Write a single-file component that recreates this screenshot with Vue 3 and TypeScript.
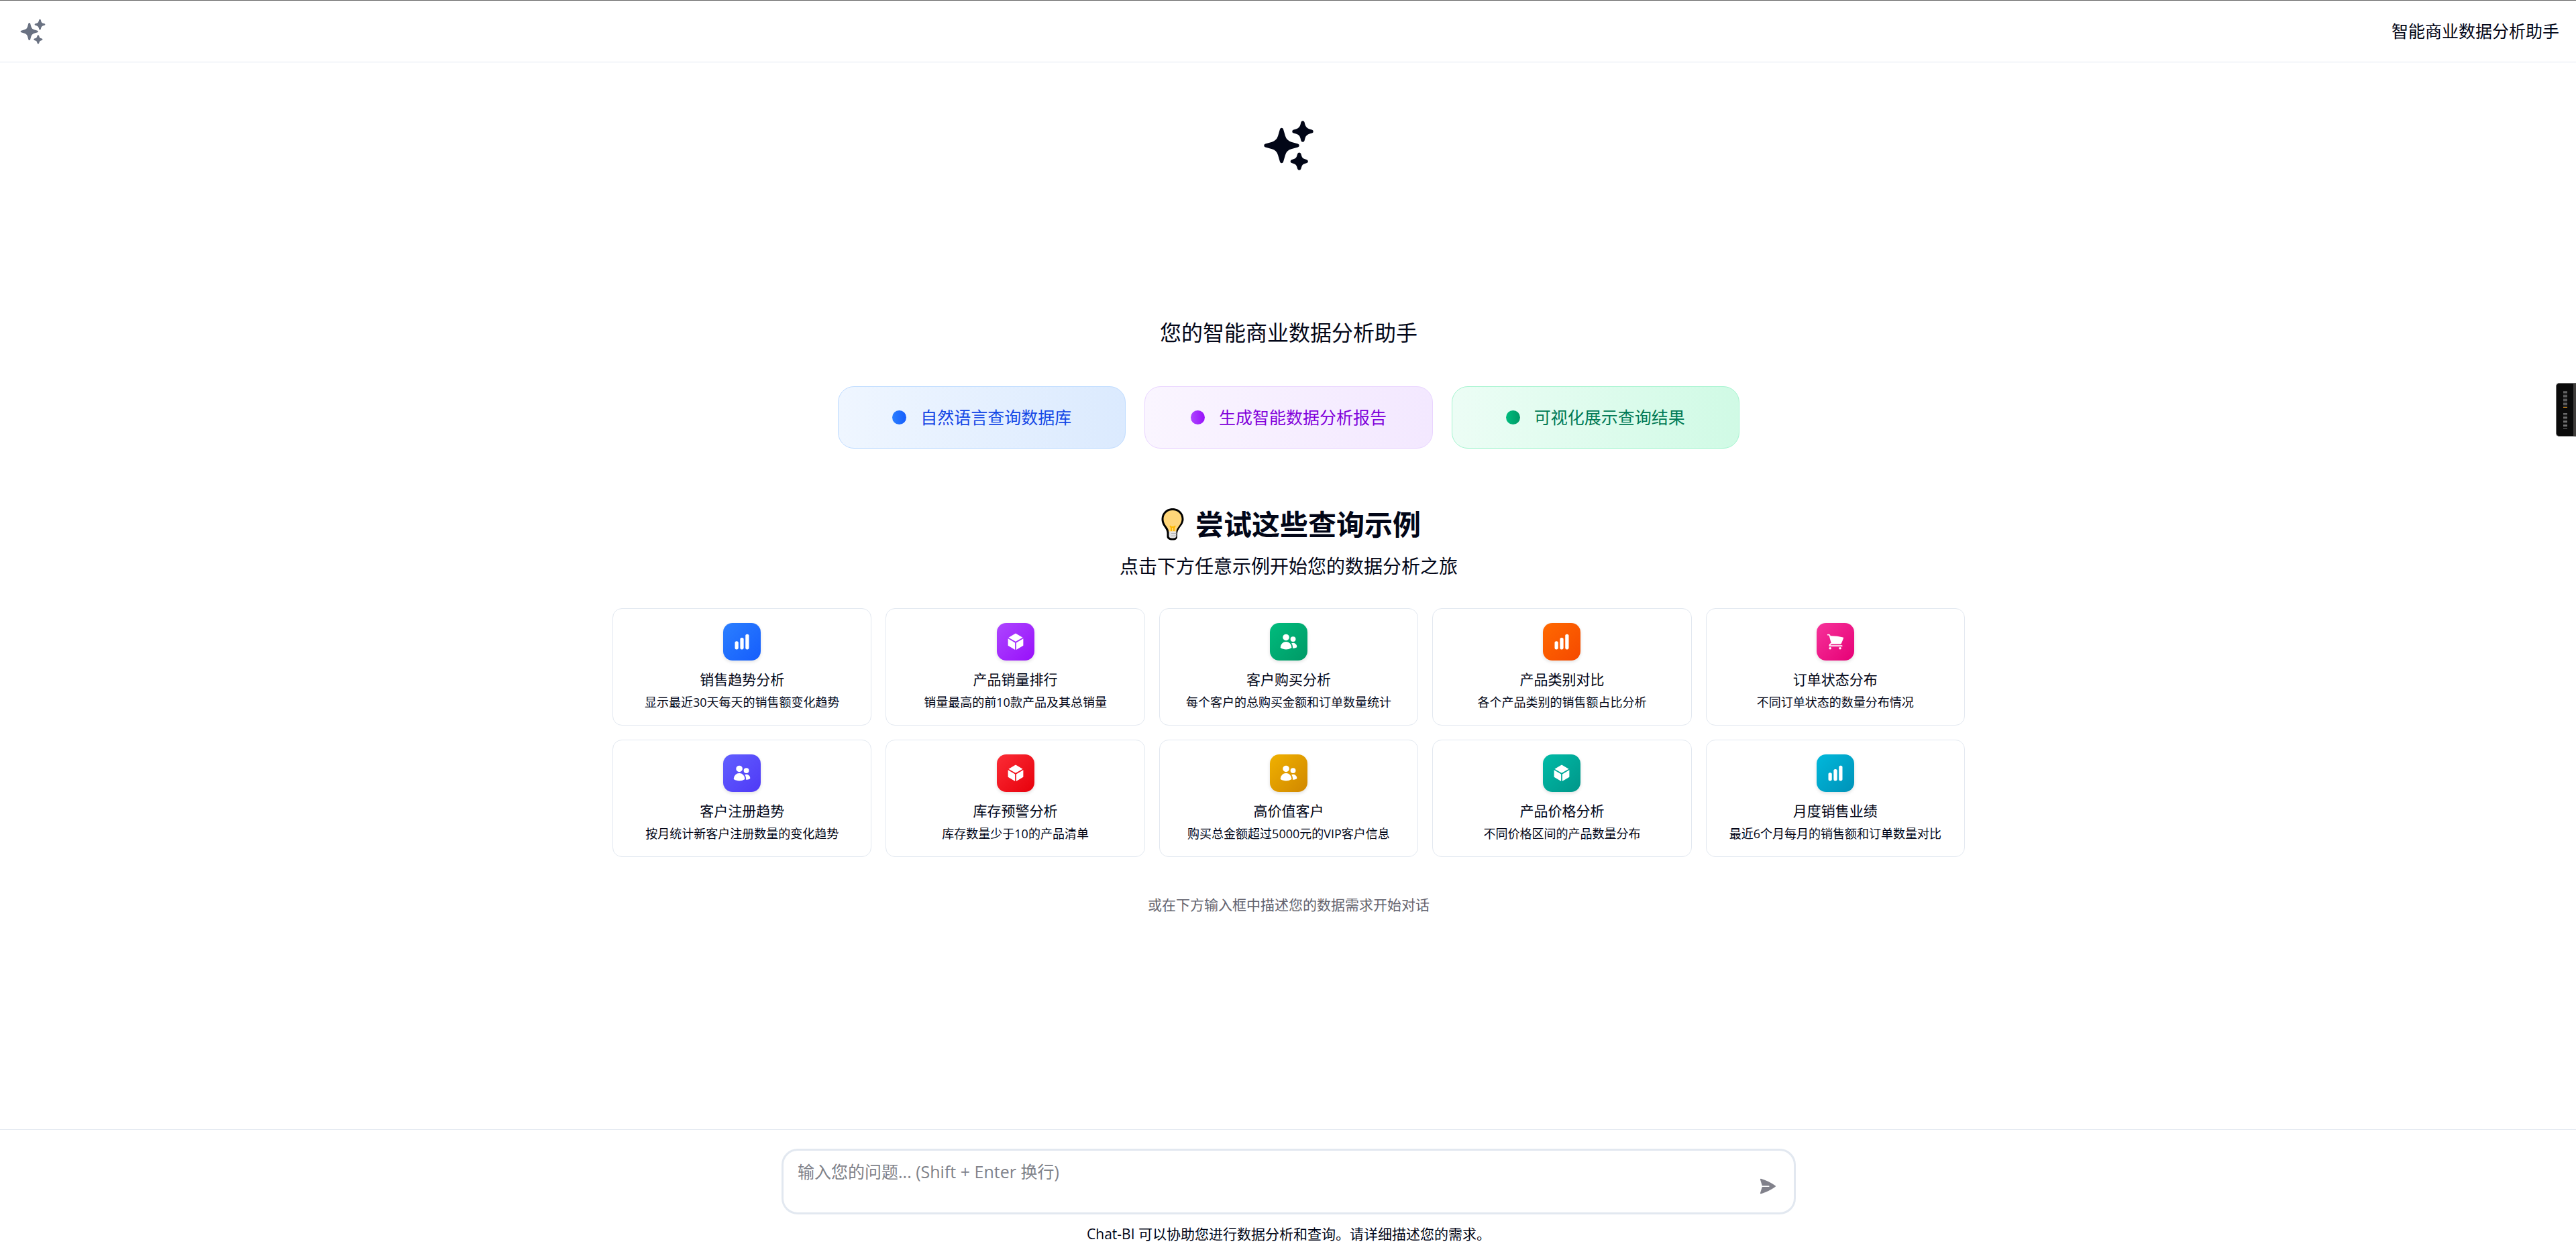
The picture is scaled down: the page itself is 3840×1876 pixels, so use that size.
<script setup lang="ts">
import { ref } from 'vue'

type IconName = 'chart' | 'cube' | 'users' | 'cart'

interface Feature {
  label: string
  tone: string
}

interface Example {
  title: string
  description: string
  icon: IconName
  tone: string
}

const iconPaths: Record<IconName, string> = {
  chart:
    'M18.375 2.25c-1.035 0-1.875.84-1.875 1.875v15.75c0 1.035.84 1.875 1.875 1.875h.75c1.035 0 1.875-.84 1.875-1.875V4.125c0-1.036-.84-1.875-1.875-1.875h-.75ZM9.75 8.625c0-1.036.84-1.875 1.875-1.875h.75c1.036 0 1.875.84 1.875 1.875v11.25c0 1.035-.84 1.875-1.875 1.875h-.75a1.875 1.875 0 0 1-1.875-1.875V8.625ZM3 13.125c0-1.036.84-1.875 1.875-1.875h.75c1.036 0 1.875.84 1.875 1.875v6.75c0 1.035-.84 1.875-1.875 1.875h-.75A1.875 1.875 0 0 1 3 19.875v-6.75Z',
  cube: 'M12.378 1.602a.75.75 0 0 0-.756 0L3 6.632l9 5.25 9-5.25-8.622-5.03ZM21.75 7.93l-9 5.25v9l8.628-5.032a.75.75 0 0 0 .372-.648V7.93ZM11.25 22.18v-9l-9-5.25v8.57a.75.75 0 0 0 .372.648l8.628 5.033Z',
  users:
    'M4.5 6.375a4.125 4.125 0 1 1 8.25 0 4.125 4.125 0 0 1-8.25 0ZM14.25 8.625a3.375 3.375 0 1 1 6.75 0 3.375 3.375 0 0 1-6.75 0ZM1.5 19.125a7.125 7.125 0 0 1 14.25 0v.003l-.001.119a.75.75 0 0 1-.363.63 13.067 13.067 0 0 1-6.761 1.873c-2.472 0-4.786-.684-6.76-1.873a.75.75 0 0 1-.364-.63l-.001-.122ZM17.25 19.128l-.001.144a2.25 2.25 0 0 1-.233.96 10.088 10.088 0 0 0 5.06-1.01.75.75 0 0 0 .42-.643 4.875 4.875 0 0 0-6.957-4.611 8.586 8.586 0 0 1 1.71 5.157v.003Z',
  cart: 'M2.25 2.25a.75.75 0 0 0 0 1.5h1.386c.17 0 .318.114.362.278l2.558 9.592a3.752 3.752 0 0 0-2.806 3.63c0 .414.336.75.75.75h15.75a.75.75 0 0 0 0-1.5H5.378A2.25 2.25 0 0 1 7.5 15h11.218a.75.75 0 0 0 .674-.421 60.358 60.358 0 0 0 2.96-7.228.75.75 0 0 0-.525-.965A60.864 60.864 0 0 0 5.68 4.509l-.232-.867A1.875 1.875 0 0 0 3.636 2.25H2.25ZM3.75 20.25a1.5 1.5 0 1 1 3 0 1.5 1.5 0 0 1-3 0ZM16.5 20.25a1.5 1.5 0 1 1 3 0 1.5 1.5 0 0 1-3 0Z',
}

const sparkles =
  'M9 4.5a.75.75 0 0 1 .721.544l.813 2.846a3.75 3.75 0 0 0 2.576 2.576l2.846.813a.75.75 0 0 1 0 1.442l-2.846.813a3.75 3.75 0 0 0-2.576 2.576l-.813 2.846a.75.75 0 0 1-1.442 0l-.813-2.846a3.75 3.75 0 0 0-2.576-2.576l-2.846-.813a.75.75 0 0 1 0-1.442l2.846-.813A3.75 3.75 0 0 0 7.466 7.89l.813-2.846A.75.75 0 0 1 9 4.5ZM18 1.5a.75.75 0 0 1 .728.568l.258 1.036c.236.94.97 1.674 1.91 1.91l1.036.258a.75.75 0 0 1 0 1.456l-1.036.258c-.94.236-1.674.97-1.91 1.91l-.258 1.036a.75.75 0 0 1-1.456 0l-.258-1.036a2.625 2.625 0 0 0-1.91-1.91l-1.036-.258a.75.75 0 0 1 0-1.456l1.036-.258a2.625 2.625 0 0 0 1.91-1.91l.258-1.036A.75.75 0 0 1 18 1.5ZM16.5 15a.75.75 0 0 1 .712.513l.394 1.183c.15.447.5.799.948.948l1.183.395a.75.75 0 0 1 0 1.422l-1.183.395c-.447.15-.799.5-.948.948l-.395 1.183a.75.75 0 0 1-1.422 0l-.395-1.183a1.5 1.5 0 0 0-.948-.948l-1.183-.395a.75.75 0 0 1 0-1.422l1.183-.395c.447-.15.799-.5.948-.948l.395-1.183A.75.75 0 0 1 16.5 15Z'

const features: Feature[] = [
  { label: '自然语言查询数据库', tone: 'blue' },
  { label: '生成智能数据分析报告', tone: 'purple' },
  { label: '可视化展示查询结果', tone: 'emerald' },
]

const examples: Example[] = [
  { title: '销售趋势分析', description: '显示最近30天每天的销售额变化趋势', icon: 'chart', tone: 'blue' },
  { title: '产品销量排行', description: '销量最高的前10款产品及其总销量', icon: 'cube', tone: 'purple' },
  { title: '客户购买分析', description: '每个客户的总购买金额和订单数量统计', icon: 'users', tone: 'emerald' },
  { title: '产品类别对比', description: '各个产品类别的销售额占比分析', icon: 'chart', tone: 'orange' },
  { title: '订单状态分布', description: '不同订单状态的数量分布情况', icon: 'cart', tone: 'pink' },
  { title: '客户注册趋势', description: '按月统计新客户注册数量的变化趋势', icon: 'users', tone: 'indigo' },
  { title: '库存预警分析', description: '库存数量少于10的产品清单', icon: 'cube', tone: 'red' },
  { title: '高价值客户', description: '购买总金额超过5000元的VIP客户信息', icon: 'users', tone: 'yellow' },
  { title: '产品价格分析', description: '不同价格区间的产品数量分布', icon: 'cube', tone: 'teal' },
  { title: '月度销售业绩', description: '最近6个月每月的销售额和订单数量对比', icon: 'chart', tone: 'cyan' },
]

const question = ref('')

function pick(example: Example) {
  question.value = example.description
}
</script>

<template>
  <div class="page">
    <header class="topbar">
      <svg class="brand" viewBox="0 0 24 24" fill="currentColor" aria-hidden="true"><path :d="sparkles" /></svg>
      <span class="topbar-title">智能商业数据分析助手</span>
    </header>

    <main class="main">
      <svg class="hero-icon" viewBox="0 0 24 24" fill="currentColor" aria-hidden="true"><path :d="sparkles" /></svg>
      <h1 class="hero-title">您的智能商业数据分析助手</h1>

      <ul class="features">
        <li v-for="f in features" :key="f.label" class="feature" :class="f.tone">
          <span class="dot"></span>
          <span>{{ f.label }}</span>
        </li>
      </ul>

      <h2 class="examples-title">
        <svg class="bulb" viewBox="0 0 48 48" aria-hidden="true">
          <path
            d="M24 0C14.500 0 7.500 7 7.500 16c0 6 2.500 9.500 5 13 2 3 3 5.500 3 9v4c0 3.500 3 5.500 8.500 5.500s7-2 7-5.500v-4c0-3.500 1.500-6 3.500-9 2.500-3.500 6-7 6-13C40.500 7 33.500 0 24 0Z"
            fill="#000"
          />
          <path
            d="M24 3C16 3 10.500 8.700 10.500 16c0 5.200 2.300 8.200 4.800 11.700 1.700 2.500 2.700 4.300 3 7.300h11c.4-3 1.400-4.800 3.200-7.300 2.500-3.500 5-6.500 5-11.700C37.500 8.700 32 3 24 3Z"
            fill="#ffd679"
          />
          <path d="M22 34v-5l-2-3M26 34v-5l2-3M21 28h6" fill="none" stroke="#ffb900" stroke-width="2" />
          <path d="M18.500 34.500h11v7c0 2-2 3.300-5.500 3.300s-5.500-1.300-5.500-3.300v-7Z" fill="#e3e3e3" />
          <path d="M22 37.500h7.500M22 41h7.500" stroke="#b4b4b4" stroke-width="1" />
        </svg>
        <span>尝试这些查询示例</span>
      </h2>
      <p class="examples-sub">点击下方任意示例开始您的数据分析之旅</p>

      <div class="cards">
        <button v-for="e in examples" :key="e.title" type="button" class="card" @click="pick(e)">
          <span class="tile" :class="e.tone">
            <svg viewBox="0 0 24 24" fill="currentColor" aria-hidden="true"><path :d="iconPaths[e.icon]" /></svg>
          </span>
          <span class="card-title">{{ e.title }}</span>
          <span class="card-text">{{ e.description }}</span>
        </button>
      </div>

      <p class="hint">或在下方输入框中描述您的数据需求开始对话</p>
    </main>

    <footer class="composer">
      <form class="box" @submit.prevent>
        <textarea
          v-model="question"
          class="input"
          rows="1"
          aria-label="输入您的问题"
          placeholder="输入您的问题... (Shift + Enter 换行)"
        ></textarea>
        <button type="submit" class="send" aria-label="发送">
          <svg viewBox="0 0 24 24" fill="currentColor" aria-hidden="true">
            <path
              d="M3.478 2.404a.75.75 0 0 0-.926.941l2.432 7.905H13.5a.75.75 0 0 1 0 1.5H4.984l-2.432 7.905a.75.75 0 0 0 .926.94 60.519 60.519 0 0 0 18.445-8.986.75.75 0 0 0 0-1.218A60.517 60.517 0 0 0 3.478 2.404Z"
            />
          </svg>
        </button>
      </form>
      <p class="note">Chat-BI 可以协助您进行数据分析和查询。请详细描述您的需求。</p>
    </footer>

    <aside class="meter" aria-hidden="true">
      <span class="bars"></span>
      <span class="mark"></span>
      <span class="bars second"></span>
    </aside>
  </div>
</template>

<style>
body {
  margin: 0;
  background: #fff;
}
</style>

<style scoped>
.page {
  box-sizing: border-box;
  display: flex;
  flex-direction: column;
  min-height: 100vh;
  border-top: 1px solid #666;
  color: #020617;
  font-family: 'Open Sans', 'Noto Sans CJK SC', sans-serif;
  font-size: 21px;
}

h1,
h2,
p,
ul {
  margin: 0;
  padding: 0;
}

button,
textarea {
  font: inherit;
  color: inherit;
}

.topbar {
  display: flex;
  align-items: center;
  justify-content: space-between;
  height: 91px;
  padding: 0 25px 0 28px;
  border-bottom: 1px solid #e2e8f0;
}

.brand {
  width: 42px;
  height: 42px;
  color: #6a7282;
}

.topbar-title {
  font-size: 25px;
  line-height: 35px;
}

.main {
  flex: 1;
  display: flex;
  flex-direction: column;
  align-items: center;
  padding: 82px 28px 28px 30px;
}

.hero-icon {
  width: 84px;
  height: 84px;
}

.hero-title {
  margin-top: 216px;
  font-size: 32px;
  line-height: 42px;
  font-weight: 400;
}

.features {
  display: grid;
  grid-template-columns: repeat(3, 1fr);
  gap: 28px;
  width: 100%;
  max-width: 1344px;
  margin-top: 59px;
  list-style: none;
}

.feature {
  display: flex;
  align-items: center;
  justify-content: center;
  gap: 21px;
  padding: 28px 20px;
  border: 1px solid;
  border-radius: 24px;
  font-size: 25px;
  line-height: 35px;
}

.dot {
  width: 21px;
  height: 21px;
  border-radius: 50%;
}

.feature.blue {
  background: linear-gradient(to right, #eff6ff, #dbeafe);
  border-color: #bedbff;
  color: #1447e6;
}

.feature.purple {
  background: linear-gradient(to right, #faf5ff, #f3e8ff);
  border-color: #e9d4ff;
  color: #8200db;
}

.feature.emerald {
  background: linear-gradient(to right, #ecfdf5, #d0fae5);
  border-color: #a4f4cf;
  color: #007a55;
}

.blue .dot {
  background: linear-gradient(to right, #2b7fff, #155dfc);
}

.purple .dot {
  background: linear-gradient(to right, #ad46ff, #9810fa);
}

.emerald .dot {
  background: linear-gradient(to right, #00bc7d, #009966);
}

.examples-title {
  display: flex;
  align-items: center;
  gap: 10px;
  margin-top: 85px;
  font-size: 42px;
  line-height: 56px;
  font-weight: 700;
}

.bulb {
  width: 48px;
  height: 48px;
}

.examples-sub {
  margin-top: 13px;
  font-size: 28px;
  line-height: 42px;
}

.cards {
  display: grid;
  grid-template-columns: repeat(5, 1fr);
  gap: 21px;
  width: 100%;
  max-width: 2016px;
  margin-top: 42px;
}

.card {
  display: flex;
  flex-direction: column;
  align-items: center;
  padding: 21px 20px;
  border: 1px solid #e2e8f0;
  border-radius: 14px;
  background: #fff;
  cursor: pointer;
}

.tile {
  display: flex;
  align-items: center;
  justify-content: center;
  width: 56px;
  height: 56px;
  border-radius: 14px;
  color: #fff;
  box-shadow: 0 2px 5px rgb(0 0 0 / 12%);
}

.tile svg {
  width: 28px;
  height: 28px;
}

.tile.blue {
  background: linear-gradient(to bottom right, #2b7fff, #155dfc);
}

.tile.purple {
  background: linear-gradient(to bottom right, #ad46ff, #9810fa);
}

.tile.emerald {
  background: linear-gradient(to bottom right, #00bc7d, #009966);
}

.tile.orange {
  background: linear-gradient(to bottom right, #ff6900, #f54900);
}

.tile.pink {
  background: linear-gradient(to bottom right, #f6339a, #e60076);
}

.tile.indigo {
  background: linear-gradient(to bottom right, #615fff, #4f39f6);
}

.tile.red {
  background: linear-gradient(to bottom right, #fb2c36, #e7000b);
}

.tile.yellow {
  background: linear-gradient(to bottom right, #f0b100, #d08700);
}

.tile.teal {
  background: linear-gradient(to bottom right, #00bba7, #009689);
}

.tile.cyan {
  background: linear-gradient(to bottom right, #00b8db, #0092b8);
}

.card-title {
  margin-top: 14px;
  font-size: 21px;
  line-height: 28px;
}

.card-text {
  margin-top: 7px;
  font-size: 18px;
  line-height: 26px;
}

.hint {
  margin-top: 57px;
  color: #64646f;
  font-size: 21px;
  line-height: 28px;
}

.composer {
  display: flex;
  flex-direction: column;
  align-items: center;
  padding: 28px 28px 21px 30px;
  border-top: 1px solid #e2e8f0;
}

.box {
  box-sizing: border-box;
  display: flex;
  align-items: flex-end;
  width: 100%;
  max-width: 1512px;
  border: 3px solid #e2e8f0;
  border-radius: 24px;
  background: #fff;
}

.input {
  box-sizing: border-box;
  flex: 1;
  height: 92px;
  padding: 14px 21px;
  border: 0;
  outline: 0;
  background: transparent;
  font-size: 25px;
  line-height: 35px;
  resize: none;
}

.input::placeholder {
  color: #80828a;
  opacity: 1;
}

.send {
  display: flex;
  align-items: center;
  justify-content: center;
  width: 56px;
  height: 56px;
  margin: 0 11px 11px 0;
  padding: 0;
  border: 0;
  background: transparent;
  color: #81818b;
}

.send svg {
  width: 28px;
  height: 28px;
}

.note {
  margin-top: 14px;
  font-size: 21px;
  line-height: 30px;
}

.meter {
  position: fixed;
  top: 571px;
  right: 0;
  box-sizing: border-box;
  width: 30px;
  height: 80px;
  padding: 11px 0 0 10px;
  border: 1px solid #777;
  border-right: 4px solid #3f3d3b;
  border-radius: 5px 0 0 5px;
  background: #0a0a0a;
}

.bars,
.mark {
  display: block;
  width: 6px;
}

.bars {
  height: 24px;
  background: repeating-linear-gradient(#777 0 1px, #0a0a0a 1px 2px);
}

.mark {
  height: 1px;
  background: #d08a1c;
}

.bars.second {
  margin-top: 8px;
}
</style>
